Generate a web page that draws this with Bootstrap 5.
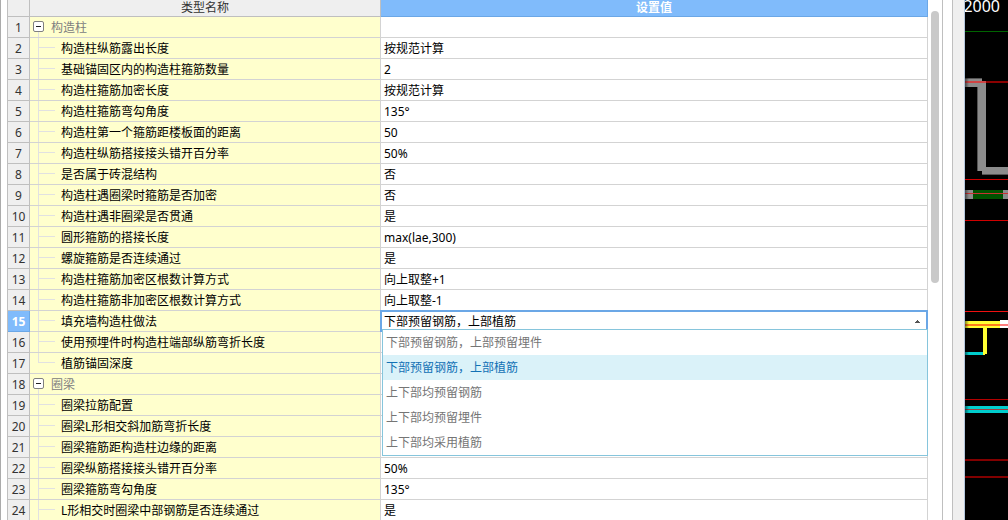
<!DOCTYPE html>
<html lang="zh-CN">
<head>
<meta charset="utf-8">
<meta name="viewport" content="width=device-width, initial-scale=1">
<title>构造柱设置</title>
<link href="https://cdn.jsdelivr.net/npm/bootstrap@5.3.0/dist/css/bootstrap.min.css" rel="stylesheet">
<style>
  body { font-family: "Noto Sans", "Noto Sans CJK SC", sans-serif; font-size: 12px; line-height: 18px; color: #000; background: #fff; }
  .edge { width: 8px; border-left: 1px solid #ababab; border-right: 1px solid #bfbfbf; }
  .settings { border-collapse: separate; border-spacing: 0; table-layout: fixed; }
  .settings th, .settings td { padding: 2px 0 0; border-right: 1px solid #d3d3d3; border-bottom: 1px solid #d3d3d3; height: 21px; white-space: nowrap; font-weight: 400; }
  .settings th { background: #efefef; border-color: #bfbfbf; color: #333; text-align: center; }
  .settings thead th { height: 17px; padding: 0; line-height: 16px; }
  .settings th.picked { background: #80bbfb; border-color: #6ba7e6; color: #fff; font-weight: 700; }
  .col-num { width: 22px; }
  .col-name { width: 351px; }
  .settings td.label-cell { background: #ffffcd; padding: 0; }
  .label-row { height: 20px; line-height: 22px; }
  .settings td.value-cell { padding-left: 3px; }
  .settings td.group-cell { color: #808080; }
  .guide { width: 17px; height: 20px; margin: 0 6px 0 8px; flex: none;
    background: linear-gradient(#e1e1e1, #e1e1e1) 0 0 / 1px 100% no-repeat, linear-gradient(#e1e1e1, #e1e1e1) 0 9px / 100% 1px no-repeat; }
  .guide.last { background-size: 1px 10px, 100% 1px; }
  .toggle { width: 11px; height: 20px; margin: 0 7px 0 3px; }
  .toggle svg { display: block; }
  .settings td.combo-cell { padding: 0; border-color: #6ba7e6; }
  .combo { height: 20px; padding: 0 0 0 2px; border: 1px solid #6ba7e6; border-bottom: 0; background: #fff; color: #000; appearance: none; line-height: 18px; outline: 1px solid #6ba7e6; }
  .combo-arrow { right: 7px; top: 9px; }
  .choices { top: 18px; left: 1px; right: -1px; z-index: 5; background: #fff; border: 1px solid #86c5dc; }
  .choices button { display: block; width: 100%; height: 25px; padding: 0 3px; border: 0; background: #fff; color: #757575; text-align: left; line-height: 25px; }
  .choices button.active { background: #daf2f9; color: #1271b5; }
  .scroll-track { width: 15px; padding: 11px 0 0 3px; border-right: 1px solid #bfbfbf; }
  .thumb { width: 8px; height: 272px; border-radius: 4px; background: #c9c9c9; }
  .gutter { width: 10px; border-right: 1px solid #bfbfbf; }
  .splitter { width: 12px; background: #efefef; border-right: 1px solid #b5c7dc; }
  .drawing { width: 43px; background: #000; }
  .drawing svg { display: block; }
</style>
</head>
<body class="overflow-hidden">
<main class="d-flex vh-100 overflow-hidden">
  <div class="edge flex-shrink-0"></div>
  <section class="flex-grow-1" aria-label="设置">
    <table class="settings w-100">
      <colgroup><col class="col-num"><col class="col-name"><col></colgroup>
      <thead><tr><th></th><th scope="col">类型名称</th><th scope="col" class="picked">设置值</th></tr></thead>
      <tbody id="rows"></tbody>
    </table>
  </section>
  <div class="scroll-track flex-shrink-0"><div class="thumb"></div></div>
  <div class="gutter flex-shrink-0"></div>
  <div class="splitter flex-shrink-0"></div>
  <aside class="drawing flex-shrink-0" aria-label="图纸">
    <svg width="43" height="520" shape-rendering="crispEdges">
      <defs><linearGradient id="fade"><stop offset="0" stop-opacity=".5"/><stop offset="1" stop-opacity="0"/></linearGradient></defs>
      <text x="35" y="12" text-anchor="end" font-family="Noto Sans" font-size="16" fill="#fff">2000</text>
      <path fill="#006400" d="M0 31h43v1H0z"/>
      <path fill="#8c8c8c" d="M0 78h17v4h4v85h22v8H17v-4h-5V87H0z"/>
      <path fill="#555" d="M0 78h17v1H0zM12 87h1v84h-1zM17 174h26v1H17z"/>
      <path fill="#8b0000" d="M17 81h26v2H17z"/>
      <path fill="#d04444" d="M0 81h21v2H0z"/>
      <path fill="#d00000" d="M0 179h43v1H0zM0 220h43v1H0z"/>
      <path fill="#8c8c8c" d="M0 190h43v9H0z"/>
      <path fill="#005200" d="M8 190h30v9H8z"/>
      <path fill="#c83232" d="M0 193h43v1H0z"/>
      <path fill="#f01010" d="M0 311h43v1H0z"/>
      <path fill="#ff3" d="M0 321h35v7H22v26h-2v1h-2v-27H0z"/>
      <path fill="#fff" d="M35 320h8v8h-8z"/>
      <path fill="#ff7d1e" d="M0 324h35v2H0z"/>
      <path fill="#ff7d7d" d="M35 324h8v2h-8z"/>
      <path fill="#00cdcd" d="M0 352h18v3H0zM0 406h43v7H0z"/>
      <path fill="#b40000" d="M0 399h43v1H0z"/>
      <path fill="#a03c3c" d="M0 409h43v1H0z"/>
      <path fill="#820000" d="M0 459h43v2H0zM0 476h43v2H0z"/>
      <path fill="url(#fade)" d="M0 78h4v9H0zM0 190h4v9H0zM0 321h4v7H0zM0 352h4v3H0zM0 406h4v7H0z"/>
    </svg>
  </aside>
</main>
<script>
  const rows = [
    ['构造柱', null], ['构造柱纵筋露出长度', '按规范计算'], ['基础锚固区内的构造柱箍筋数量', '2'],
    ['构造柱箍筋加密长度', '按规范计算'], ['构造柱箍筋弯勾角度', '135°'], ['构造柱第一个箍筋距楼板面的距离', '50'],
    ['构造柱纵筋搭接接头错开百分率', '50%'], ['是否属于砖混结构', '否'], ['构造柱遇圈梁时箍筋是否加密', '否'],
    ['构造柱遇非圈梁是否贯通', '是'], ['圆形箍筋的搭接长度', 'max(lae,300)'], ['螺旋箍筋是否连续通过', '是'],
    ['构造柱箍筋加密区根数计算方式', '向上取整+1'], ['构造柱箍筋非加密区根数计算方式', '向上取整-1'],
    ['填充墙构造柱做法', 'combo'], ['使用预埋件时构造柱端部纵筋弯折长度', ''], ['植筋锚固深度', ''],
    ['圈梁', null], ['圈梁拉筋配置', ''], ['圈梁L形相交斜加筋弯折长度', ''], ['圈梁箍筋距构造柱边缘的距离', ''],
    ['圈梁纵筋搭接接头错开百分率', '50%'], ['圈梁箍筋弯勾角度', '135°'], ['L形相交时圈梁中部钢筋是否连续通过', '是']
  ];
  const options = ['下部预留钢筋，上部预留埋件', '下部预留钢筋，上部植筋', '上下部均预留钢筋', '上下部均预留埋件', '上下部均采用植筋'];
  const toggle = '<button type="button" class="toggle border-0 p-0 bg-transparent" aria-label="折叠"><svg width="11" height="20"><rect x=".5" y="4.5" width="10" height="10" rx="1.5" fill="#fff" stroke="#808080"/><path d="M3 9.5h5" stroke="#222"/><path d="M5 15h1v5H5z" fill="#e1e1e1"/></svg></button>';
  const combo = '<div class="position-relative"><select class="combo d-block w-100" aria-label="填充墙构造柱做法">' +
    options.map((o, i) => `<option${i === 1 ? ' selected' : ''}>${o}</option>`).join('') + '</select>' +
    '<svg class="combo-arrow position-absolute" width="5" height="3"><path d="M0 3V2h1V1h1V0h1v1h1v1h1v1z" fill="#555"/></svg>' +
    '<div class="choices position-absolute">' +
    options.map((o, i) => `<button type="button"${i === 1 ? ' class="active"' : ''}>${o}</button>`).join('') + '</div></div>';
  document.getElementById('rows').innerHTML = rows.map(([name, value], i) => {
    const last = i + 1 === rows.length ? false : rows[i + 1][1] === null;
    const isCombo = value === 'combo';
    const label = value === null
      ? `<td class="label-cell group-cell"><div class="label-row d-flex">${toggle}<span>${name}</span></div></td>`
      : `<td class="label-cell"><div class="label-row d-flex"><span class="guide${last ? ' last' : ''}"></span><span>${name}</span></div></td>`;
    return `<tr><th scope="row"${isCombo ? ' class="picked"' : ''}>${i + 1}</th>${label}` +
      `<td class="value-cell${isCombo ? ' combo-cell' : ''}">${isCombo ? combo : value || ''}</td></tr>`;
  }).join('');
</script>
<script src="https://cdn.jsdelivr.net/npm/bootstrap@5.3.0/dist/js/bootstrap.bundle.min.js"></script>
</body>
</html>
